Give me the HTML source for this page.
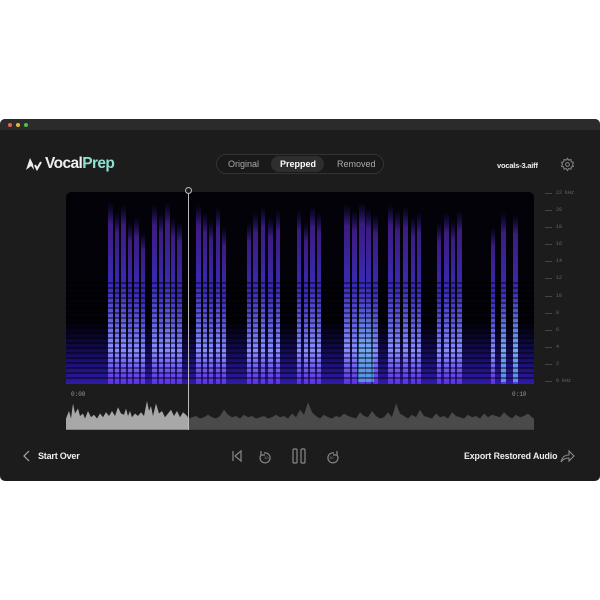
<!DOCTYPE html>
<html><head><style>
*{margin:0;padding:0;box-sizing:border-box}
body{width:600px;height:600px;background:#fff;font-family:"Liberation Sans",sans-serif;position:relative;overflow:hidden}
.win{position:absolute;left:0;top:119px;width:600px;height:362px;background:#1c1c1c;border-radius:5px;overflow:hidden}
.tb{height:11px;background:#2b2b2b}
.dot{position:absolute;top:4px;width:4px;height:4px;border-radius:50%}
.t{position:absolute;color:#eee;font-weight:bold}
.seg{position:absolute;left:216px;top:35px;width:168px;height:20px;border:1px solid #333;border-radius:10px;background:#191919}
.seg span{position:absolute;top:4px;font-size:9px;color:#aaa}
.pill{position:absolute;left:54px;top:1px;width:53px;height:16px;border-radius:8px;background:#2e2e2e}
.fl{position:absolute;left:556px;font-size:5px;color:#666;font-family:"Liberation Mono",monospace}
.fl:before{content:"";position:absolute;left:-11px;top:3px;width:7px;height:1px;background:#444}
</style></head><body>
<div class="win">
<div class="tb"></div>
<div class="dot" style="left:8px;background:#ec5f57"></div>
<div class="dot" style="left:16px;background:#e6b73b"></div>
<div class="dot" style="left:24px;background:#4fc142"></div>
<svg style="position:absolute;left:25px;top:37px" width="18" height="15" viewBox="0 0 18 15"><path d="M1 14 L5 2 L8 8 L9 14 L6 10 Z" fill="#eee"/><path d="M10 9 L12 13 L16 6" stroke="#eee" stroke-width="2" fill="none"/></svg>
<div class="t" style="left:45px;top:36px;font-size:15.5px;letter-spacing:-0.6px">Vocal<span style="color:#8fe0d3">Prep</span></div>
<div class="seg"><div class="pill"></div><span style="left:11px">Original</span><span style="left:63px;color:#fff;font-weight:bold">Prepped</span><span style="left:120px">Removed</span></div>
<div class="t" style="left:497px;top:42px;font-size:7.5px;letter-spacing:-0.2px">vocals-3.aiff</div>
<svg style="position:absolute;left:560px;top:38px" width="15" height="15" viewBox="0 0 24 24" fill="none" stroke="#888" stroke-width="1.6"><circle cx="12" cy="12" r="3"/><path d="M12 2l2 3 3.5-1 .5 3.5 3.5 1-1.5 3.5 1.5 3-3.5 1-.5 3.5-3.5-1-2 3-2-3-3.5 1-.5-3.5-3.5-1 1.5-3.5L2.5 8.5 6 7.5 6.5 4 10 5z"/></svg>

<svg style="position:absolute;left:66px;top:73px" width="468" height="192">
<defs>
<linearGradient id="g" x1="0" y1="0" x2="0" y2="1"><stop offset="0" stop-color="#3a20c0" stop-opacity="0"/><stop offset=".12" stop-color="#6a30e0" stop-opacity=".55"/><stop offset=".45" stop-color="#4a38f0" stop-opacity=".75"/><stop offset=".8" stop-color="#8890ff"/><stop offset="1" stop-color="#5a30e0"/></linearGradient>
<linearGradient id="b" x1="0" y1="0" x2="0" y2="1"><stop offset="0" stop-color="#1a10a0" stop-opacity="0"/><stop offset=".5" stop-color="#2a18c0" stop-opacity=".45"/><stop offset="1" stop-color="#3a20d0" stop-opacity=".8"/></linearGradient>
<linearGradient id="c" x1="0" y1="0" x2="0" y2="1"><stop offset="0" stop-color="#40d8d0" stop-opacity="0"/><stop offset="1" stop-color="#50f0e0" stop-opacity=".5"/></linearGradient>
<pattern id="s" width="6" height="5" patternUnits="userSpaceOnUse"><rect width="6" height="2" fill="#000" opacity=".45"/></pattern>
</defs>
<rect width="468" height="192" rx="5" fill="#020208"/>
<rect x="0" y="130" width="468" height="62" fill="url(#b)"/>
<g fill="url(#g)">
<rect x="42" y="10" width="5" height="182"/><rect x="49" y="20" width="4" height="172"/><rect x="55" y="12" width="5" height="180"/><rect x="62" y="30" width="4" height="162"/><rect x="68" y="25" width="5" height="167"/><rect x="75" y="40" width="4" height="152"/>
<rect x="86" y="12" width="5" height="180"/><rect x="93" y="20" width="4" height="172"/><rect x="99" y="10" width="5" height="182"/><rect x="105" y="25" width="4" height="167"/><rect x="111" y="30" width="5" height="162"/>
<rect x="130" y="12" width="5" height="180"/><rect x="137" y="20" width="4" height="172"/><rect x="143" y="28" width="4" height="164"/><rect x="150" y="15" width="4" height="177"/><rect x="156" y="35" width="4" height="157"/>
<rect x="181" y="30" width="4" height="162"/><rect x="187" y="20" width="5" height="172"/><rect x="195" y="14" width="4" height="178"/><rect x="202" y="25" width="5" height="167"/><rect x="210" y="18" width="4" height="174"/>
<rect x="231" y="18" width="4" height="174"/><rect x="238" y="30" width="4" height="162"/><rect x="244" y="14" width="5" height="178"/><rect x="251" y="20" width="4" height="172"/>
<rect x="278" y="12" width="6" height="180"/><rect x="286" y="18" width="5" height="174"/><rect x="293" y="10" width="6" height="182"/><rect x="300" y="16" width="5" height="176"/><rect x="307" y="22" width="5" height="170"/>
<rect x="322" y="12" width="5" height="180"/><rect x="329" y="18" width="5" height="174"/><rect x="337" y="14" width="5" height="178"/><rect x="345" y="24" width="4" height="168"/><rect x="351" y="20" width="4" height="172"/>
<rect x="371" y="30" width="4" height="162"/><rect x="378" y="20" width="5" height="172"/><rect x="385" y="28" width="4" height="164"/><rect x="391" y="18" width="5" height="174"/>
<rect x="425" y="35" width="4" height="157"/><rect x="435" y="20" width="5" height="172"/><rect x="447" y="22" width="5" height="170"/>
</g>
<g fill="url(#c)"><rect x="292" y="110" width="16" height="80"/><rect x="447" y="100" width="5" height="90"/><rect x="435" y="110" width="5" height="80"/></g>
<rect x="0" y="90" width="468" height="100" fill="url(#s)"/>
</svg>
<div class="fl" style="top:71px">22 kHz</div><div class="fl" style="top:88px">20</div><div class="fl" style="top:105px">18</div><div class="fl" style="top:122px">16</div><div class="fl" style="top:139px">14</div><div class="fl" style="top:156px">12</div><div class="fl" style="top:174px">10</div><div class="fl" style="top:191px">8</div><div class="fl" style="top:208px">6</div><div class="fl" style="top:225px">4</div><div class="fl" style="top:242px">2</div><div class="fl" style="top:259px">0 kHz</div>
<div style="position:absolute;left:71px;top:272px;font:6px 'Liberation Mono',monospace;color:#999">0:00</div>
<div style="position:absolute;left:512px;top:272px;font:6px 'Liberation Mono',monospace;color:#999">0:10</div>
<svg style="position:absolute;left:66px;top:280px" width="468" height="32">
<defs><clipPath id="l"><rect width="122" height="32"/></clipPath><clipPath id="r"><rect x="122" width="346" height="32"/></clipPath>
<polygon id="w" transform="translate(0,-8) scale(1,1.25)" points="0,31 0,22 3,16 5,22 7,10 9,18 12,14 14,20 17,18 19,22 22,16 25,21 28,19 31,22 34,18 37,21 40,17 43,20 46,16 49,20 52,13 55,18 58,19 60,14 62,20 64,16 66,21 69,18 72,20 75,17 78,20 81,8 83,16 85,12 87,20 90,10 93,18 96,16 99,21 102,18 105,15 108,20 111,16 114,21 117,17 120,19 123,22 126,21 130,20 134,22 138,21 142,19 146,21 150,22 154,20 158,15 162,19 166,21 170,20 174,22 178,19 182,21 186,20 190,22 194,21 198,20 202,22 206,21 210,19 214,21 218,20 222,22 226,18 230,21 234,15 238,19 242,9 246,17 250,20 254,22 258,19 262,21 266,22 270,20 274,21 278,18 282,20 286,21 290,22 294,17 298,20 302,21 306,16 310,20 314,22 318,21 322,17 326,21 330,10 334,18 338,20 342,22 346,19 350,21 354,15 358,20 362,21 366,22 370,18 374,21 378,20 382,22 386,17 390,20 394,21 398,22 402,19 406,21 410,20 414,22 418,18 422,21 426,19 430,20 434,21 438,17 442,20 446,22 450,19 454,21 458,20 462,18 466,21 468,22 468,31"/></defs>
<use href="#w" fill="#a8a8a8" clip-path="url(#l)"/><use href="#w" fill="#4a4a4a" clip-path="url(#r)"/>
</svg>
<div style="position:absolute;left:188px;top:71px;width:1px;height:240px;background:#bbb"></div>
<div style="position:absolute;left:185px;top:68px;width:7px;height:7px;border-radius:50%;border:1.2px solid #bbb;background:#1c1c1c"></div>

<svg style="position:absolute;left:22px;top:330px" width="10" height="14"><path d="M7 2 L2 7 L7 12" stroke="#aaa" stroke-width="1.2" fill="none"/></svg>
<div class="t" style="left:38px;top:332px;font-size:9px;letter-spacing:-0.2px">Start Over</div>
<svg style="position:absolute;left:230px;top:328px" width="120" height="18" fill="none" stroke="#888" stroke-width="1.2">
<path d="M3 4v10M11 4L5 9l6 5z"/>
<path d="M34 6a5 5 0 1 1-3 2M31 4v4h4" /><text x="34" y="12" font-size="4" fill="#888" stroke="none">10</text>
<rect x="63" y="2" width="4" height="14" rx="1"/><rect x="71" y="2" width="4" height="14" rx="1"/>
<path d="M104 6a5 5 0 1 0 3 2M107 4v4h-4"/><text x="99" y="12" font-size="4" fill="#888" stroke="none">10</text>
</svg>
<div class="t" style="left:464px;top:332px;font-size:8.8px;letter-spacing:-0.1px">Export Restored Audio</div>
<svg style="position:absolute;left:560px;top:330px" width="16" height="14"><path d="M9 2l5 5-5 5V9C6 9 3 10 1 13c1-5 4-7 8-7z" stroke="#888" stroke-width="1.1" fill="none"/></svg>
</div>
</body></html>
